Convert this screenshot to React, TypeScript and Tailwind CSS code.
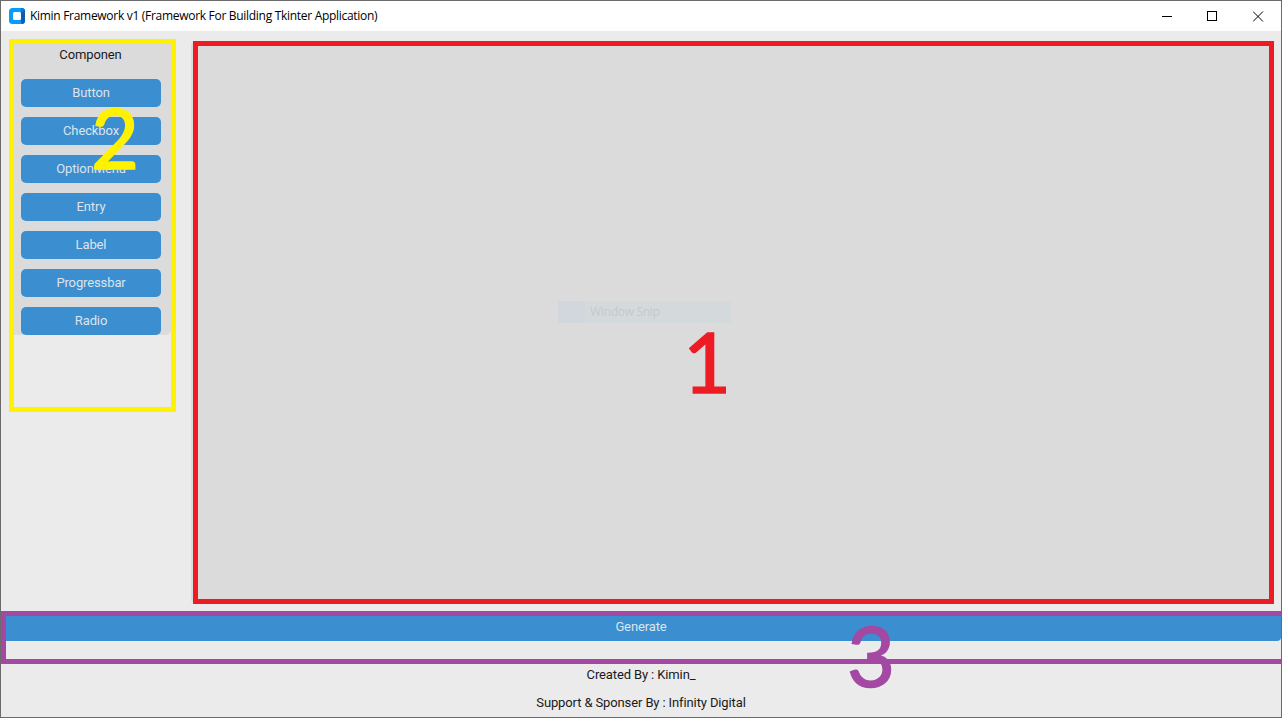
const components = ['Button', 'Checkbox', 'OptionMenu', 'Entry', 'Label', 'Progressbar', 'Radio'];

function AppIcon() {
  return (
    <svg className="ml-2 h-4 w-4 shrink-0" viewBox="0 0 16 16">
      <rect width="16" height="16" rx="3.5" fill="#0a9bfa" />
      <path d="M12.5 0a3.5 3.5 0 0 1 3.5 3.5v9a3.5 3.5 0 0 1-3.5 3.5l-.5-3V3z" fill="#0d5cab" />
      <path d="M12.5 0a3.5 3.5 0 0 1 3.3 2.5L12 5z" fill="#1278d2" />
      <rect x="4" y="4" width="8" height="8" rx="1.5" fill="#fff" />
    </svg>
  );
}

function TitleBar() {
  return (
    <header className="flex h-[30px] shrink-0 items-center bg-white">
      <AppIcon />
      <h1 className="ml-[5px] whitespace-nowrap font-['Open_Sans',sans-serif] text-[12px] leading-[30px] tracking-[-0.295px] text-black">
        Kimin Framework v1 (Framework For Building Tkinter Application)
      </h1>
      <div className="ml-auto flex h-full">
        <button className="flex w-[46px] items-center justify-center" aria-label="Minimize">
          <svg className="h-[11px] w-[11px]" viewBox="0 0 11 11" shapeRendering="crispEdges">
            <path d="M0 5.5h10" stroke="#000" />
          </svg>
        </button>
        <button className="flex w-[45px] items-center justify-center" aria-label="Maximize">
          <svg className="h-[11px] w-[11px]" viewBox="0 0 11 11" shapeRendering="crispEdges">
            <rect x="0.5" y="0.5" width="9" height="9" fill="none" stroke="#000" />
          </svg>
        </button>
        <button className="flex w-[46px] items-center justify-center" aria-label="Close">
          <svg className="h-[11px] w-[11px]" viewBox="0 0 11 11">
            <path d="M0 .5l10 10M10 .5l-10 10" stroke="#000" strokeWidth="1" />
          </svg>
        </button>
      </div>
    </header>
  );
}

function Sidebar() {
  return (
    <aside className="ml-2 h-[373px] w-[167px] shrink-0 border-[5px] border-[#fff200]">
      <div className="flex h-[291px] flex-col items-center rounded-br-[5px] bg-[#dbdbdb]">
        <div className="h-[35px] pr-[4px] text-[13px] leading-[21px] text-[#1a1a1a]">Componen</div>
        <div className="flex flex-col gap-[10px] pr-[3px]">
          {components.map((name) => (
            <button
              key={name}
              className="h-7 w-[140px] rounded-[5px] bg-[#3b8ed0] text-[13px] leading-7 text-[#dce4ee]"
            >
              {name}
            </button>
          ))}
        </div>
      </div>
    </aside>
  );
}

function Mark({ className, children }: { className: string; children: string }) {
  return (
    <span
      className={`pointer-events-none absolute font-['Lato',sans-serif] text-[83px] leading-[84px] [-webkit-text-stroke:1.5px_currentColor] ${className}`}
    >
      {children}
    </span>
  );
}

export default function App() {
  return (
    <div className="relative flex h-[718px] w-[1282px] flex-col overflow-hidden border border-[#6b6b6b] bg-[#ebebeb] font-['Roboto',sans-serif] tracking-[-0.12px]">
      <TitleBar />
      <main className="flex h-[580px] shrink-0 pt-2">
        <Sidebar />
        <section className="ml-[15px] mt-[2px] h-[563px] w-[1083px] rounded-[5px] bg-[#dbdbdb] pl-[2px]">
          <div className="h-full border-[5px] border-[#ed1c24]">
            <div className="ml-[360px] mt-[255px] flex h-[22px] w-[173px] bg-[#d4dadc] font-['Open_Sans',sans-serif] text-[12px] leading-[22px] tracking-[-0.28px] text-[#c6c9ca]">
              <div className="w-[27px] bg-[#d2d7dd]" />
              <span className="pl-[5px]">Window Snip</span>
            </div>
          </div>
        </section>
      </main>
      <div className="-mr-px h-[53px] shrink-0 border-y-[5px] border-l-[5px] border-[#a349a4]">
        <button className="block h-[25px] w-[1275px] rounded-br-[4px] bg-[#3b8ed0] pb-[4px] pr-[5px] text-[13px] leading-[21px] text-[#dce4ee]">
          Generate
        </button>
      </div>
      <footer className="flex flex-col items-center text-[13px] leading-7 text-[#1a1a1a]">
        <p className="-mt-[3px]">Created By : Kimin_</p>
        <p>Support &amp; Sponser By : Infinity Digital</p>
      </footer>
      <Mark className="left-[682px] top-[318px] text-[#ed1c24]">1</Mark>
      <Mark className="left-[90px] top-[94px] text-[#fff200]">2</Mark>
      <Mark className="left-[846px] top-[612px] text-[#a349a4]">3</Mark>
    </div>
  );
}
